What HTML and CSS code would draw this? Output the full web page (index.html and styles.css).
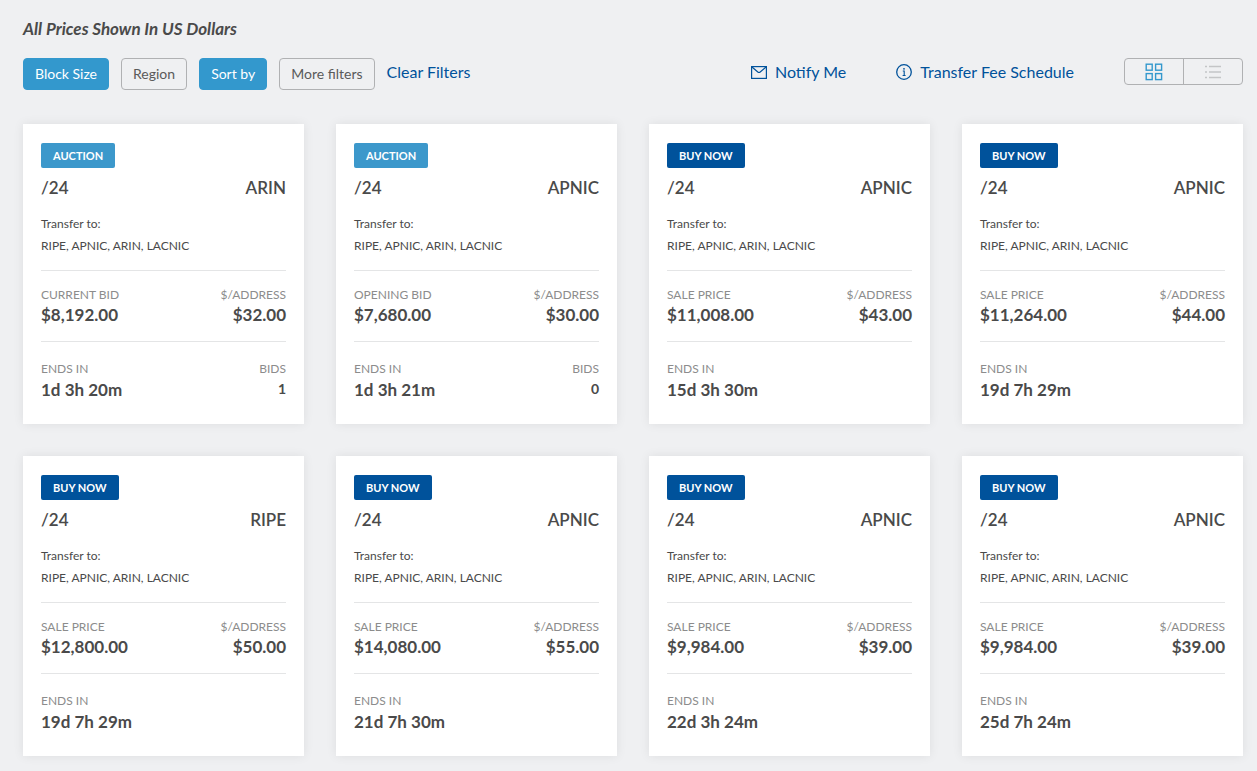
FILE: index.html
```html
<!DOCTYPE html>
<html lang="en">
<head>
    <meta charset="UTF-8">
    <meta name="viewport" content="width=device-width, initial-scale=1.0">
    <title>IPv4 Listings</title>
    <link rel="stylesheet" href="styles.css">
</head>
<body>
    <p class="notice">All Prices Shown In US Dollars</p>

    <div class="toolbar">
        <div class="filters">
            <button type="button" class="filter active">Block Size</button>
            <button type="button" class="filter">Region</button>
            <button type="button" class="filter active">Sort by</button>
            <button type="button" class="filter">More filters</button>
            <a href="#" class="link">Clear Filters</a>
        </div>
        <div class="actions">
            <a href="#" class="link">
                <svg width="16" height="16" viewBox="0 0 16 16" fill="none" stroke="currentColor" stroke-width="1.2"><rect x="0.6" y="2.6" width="14.8" height="11.8"/><path d="M1 3l5.8 5q1.2 .9 2.4 0L15 3"/></svg>
                Notify Me
            </a>
            <a href="#" class="link">
                <svg width="16" height="16" viewBox="0 0 16 16" fill="none" stroke="currentColor"><circle cx="8" cy="8" r="7.3" stroke-width="1.3"/><path d="M6.8 7h1.4v4.2M6.6 11.5h3" stroke-width="1.1"/><circle cx="8" cy="4.8" r="0.9" fill="currentColor" stroke="none"/></svg>
                Transfer Fee Schedule
            </a>
            <div class="view-toggle">
                <button type="button" class="view active" aria-label="Grid view">
                    <svg width="18" height="18" viewBox="0 0 18 18" fill="none" stroke="currentColor" stroke-width="1.4"><rect x="1.2" y="1.2" width="6" height="6"/><rect x="10.6" y="1.2" width="6" height="6"/><rect x="1.2" y="10.6" width="6" height="6"/><rect x="10.6" y="10.6" width="6" height="6"/></svg>
                </button>
                <button type="button" class="view" aria-label="List view">
                    <svg width="18" height="18" viewBox="0 0 18 18" fill="none" stroke="currentColor" stroke-width="1.4"><path d="M1 3.5h2M5 3.5h12M1 9h2M5 9h12M1 14.5h2M5 14.5h12"/></svg>
                </button>
            </div>
        </div>
    </div>

    <div class="cards">
        <div class="card">
            <span class="badge auction">AUCTION</span>
            <div class="row title"><span>/24</span><span>ARIN</span></div>
            <div class="transfer">Transfer to:<br>RIPE, APNIC, ARIN, LACNIC</div>
            <div class="row price">
                <div><div class="label">CURRENT BID</div><div class="value">$8,192.00</div></div>
                <div class="right"><div class="label">$/ADDRESS</div><div class="value">$32.00</div></div>
            </div>
            <div class="row ends">
                <div><div class="label">ENDS IN</div><div class="value">1d 3h 20m</div></div>
                <div class="right"><div class="label">BIDS</div><div class="bids">1</div></div>
            </div>
        </div>

        <div class="card">
            <span class="badge auction">AUCTION</span>
            <div class="row title"><span>/24</span><span>APNIC</span></div>
            <div class="transfer">Transfer to:<br>RIPE, APNIC, ARIN, LACNIC</div>
            <div class="row price">
                <div><div class="label">OPENING BID</div><div class="value">$7,680.00</div></div>
                <div class="right"><div class="label">$/ADDRESS</div><div class="value">$30.00</div></div>
            </div>
            <div class="row ends">
                <div><div class="label">ENDS IN</div><div class="value">1d 3h 21m</div></div>
                <div class="right"><div class="label">BIDS</div><div class="bids">0</div></div>
            </div>
        </div>

        <div class="card">
            <span class="badge">BUY NOW</span>
            <div class="row title"><span>/24</span><span>APNIC</span></div>
            <div class="transfer">Transfer to:<br>RIPE, APNIC, ARIN, LACNIC</div>
            <div class="row price">
                <div><div class="label">SALE PRICE</div><div class="value">$11,008.00</div></div>
                <div class="right"><div class="label">$/ADDRESS</div><div class="value">$43.00</div></div>
            </div>
            <div class="row ends">
                <div><div class="label">ENDS IN</div><div class="value">15d 3h 30m</div></div>
            </div>
        </div>

        <div class="card">
            <span class="badge">BUY NOW</span>
            <div class="row title"><span>/24</span><span>APNIC</span></div>
            <div class="transfer">Transfer to:<br>RIPE, APNIC, ARIN, LACNIC</div>
            <div class="row price">
                <div><div class="label">SALE PRICE</div><div class="value">$11,264.00</div></div>
                <div class="right"><div class="label">$/ADDRESS</div><div class="value">$44.00</div></div>
            </div>
            <div class="row ends">
                <div><div class="label">ENDS IN</div><div class="value">19d 7h 29m</div></div>
            </div>
        </div>

        <div class="card">
            <span class="badge">BUY NOW</span>
            <div class="row title"><span>/24</span><span>RIPE</span></div>
            <div class="transfer">Transfer to:<br>RIPE, APNIC, ARIN, LACNIC</div>
            <div class="row price">
                <div><div class="label">SALE PRICE</div><div class="value">$12,800.00</div></div>
                <div class="right"><div class="label">$/ADDRESS</div><div class="value">$50.00</div></div>
            </div>
            <div class="row ends">
                <div><div class="label">ENDS IN</div><div class="value">19d 7h 29m</div></div>
            </div>
        </div>

        <div class="card">
            <span class="badge">BUY NOW</span>
            <div class="row title"><span>/24</span><span>APNIC</span></div>
            <div class="transfer">Transfer to:<br>RIPE, APNIC, ARIN, LACNIC</div>
            <div class="row price">
                <div><div class="label">SALE PRICE</div><div class="value">$14,080.00</div></div>
                <div class="right"><div class="label">$/ADDRESS</div><div class="value">$55.00</div></div>
            </div>
            <div class="row ends">
                <div><div class="label">ENDS IN</div><div class="value">21d 7h 30m</div></div>
            </div>
        </div>

        <div class="card">
            <span class="badge">BUY NOW</span>
            <div class="row title"><span>/24</span><span>APNIC</span></div>
            <div class="transfer">Transfer to:<br>RIPE, APNIC, ARIN, LACNIC</div>
            <div class="row price">
                <div><div class="label">SALE PRICE</div><div class="value">$9,984.00</div></div>
                <div class="right"><div class="label">$/ADDRESS</div><div class="value">$39.00</div></div>
            </div>
            <div class="row ends">
                <div><div class="label">ENDS IN</div><div class="value">22d 3h 24m</div></div>
            </div>
        </div>

        <div class="card">
            <span class="badge">BUY NOW</span>
            <div class="row title"><span>/24</span><span>APNIC</span></div>
            <div class="transfer">Transfer to:<br>RIPE, APNIC, ARIN, LACNIC</div>
            <div class="row price">
                <div><div class="label">SALE PRICE</div><div class="value">$9,984.00</div></div>
                <div class="right"><div class="label">$/ADDRESS</div><div class="value">$39.00</div></div>
            </div>
            <div class="row ends">
                <div><div class="label">ENDS IN</div><div class="value">25d 7h 24m</div></div>
            </div>
        </div>
    </div>
</body>
</html>
```

FILE: styles.css
```css
* {
    box-sizing: border-box;
}

body {
    margin: 0;
    padding: 17px 14px 16px 23px;
    font-family: Lato, "Liberation Sans", sans-serif;
    background: #eff0f2;
    color: #4a4a4a;
}

.notice {
    margin: 0 0 17px;
    font-size: 17px;
    line-height: 24px;
    font-weight: bold;
    font-style: italic;
}

.toolbar {
    display: flex;
    justify-content: space-between;
    align-items: flex-start;
    margin-bottom: 34px;
}

.filters {
    display: flex;
    gap: 12px;
}

.filter {
    height: 32px;
    padding: 0 11px 2px;
    border: 1px solid #b0b1b3;
    border-radius: 4px;
    background: transparent;
    color: #5a5a5a;
    font-family: inherit;
    font-size: 14px;
    cursor: pointer;
}

.filter.active {
    border-color: #3398cd;
    background: #3398cd;
    color: #fff;
}

.link {
    display: flex;
    align-items: center;
    gap: 8px;
    height: 27px;
    color: #00529b;
    font-size: 16px;
    text-decoration: none;
}

.actions {
    display: flex;
    gap: 50px;
}

.view-toggle {
    display: flex;
    width: 119px;
    height: 27px;
    border: 1px solid #b0b1b3;
    border-radius: 4px;
}

.view {
    display: flex;
    flex: 1;
    align-items: center;
    justify-content: center;
    padding: 0;
    border: none;
    background: transparent;
    color: #c4c5c7;
    cursor: pointer;
}

.view.active {
    border-right: 1px solid #b0b1b3;
    color: #3398cd;
}

.cards {
    display: grid;
    grid-template-columns: repeat(4, 1fr);
    gap: 32px;
}

.card {
    padding: 19px 18px 23px;
    background: #fff;
    box-shadow: 0 0 10px rgba(0, 0, 0, 0.08);
}

.badge {
    display: block;
    width: fit-content;
    padding: 0 12px;
    border-radius: 2px;
    background: #00529b;
    color: #fff;
    font-size: 11px;
    font-weight: bold;
    line-height: 25px;
}

.badge.auction {
    background: #3c98cb;
}

.row {
    display: flex;
    justify-content: space-between;
}

.right {
    text-align: right;
}

.title {
    margin-top: 8px;
    font-size: 17px;
    line-height: 24px;
    font-weight: 600;
}

.transfer {
    margin: 13px 0;
    font-size: 12px;
    line-height: 22px;
}

.price {
    padding: 14px 0 16px;
    border-top: 1px solid #e4e5e6;
    border-bottom: 1px solid #e4e5e6;
}

.ends {
    padding-top: 17px;
}

.label {
    color: #8c8c8c;
    font-size: 12px;
    line-height: 20px;
}

.value {
    font-size: 17px;
    font-weight: bold;
    line-height: 20px;
}

.ends .value {
    line-height: 22px;
}

.bids {
    font-size: 14px;
    font-weight: bold;
    line-height: 20px;
}
```
